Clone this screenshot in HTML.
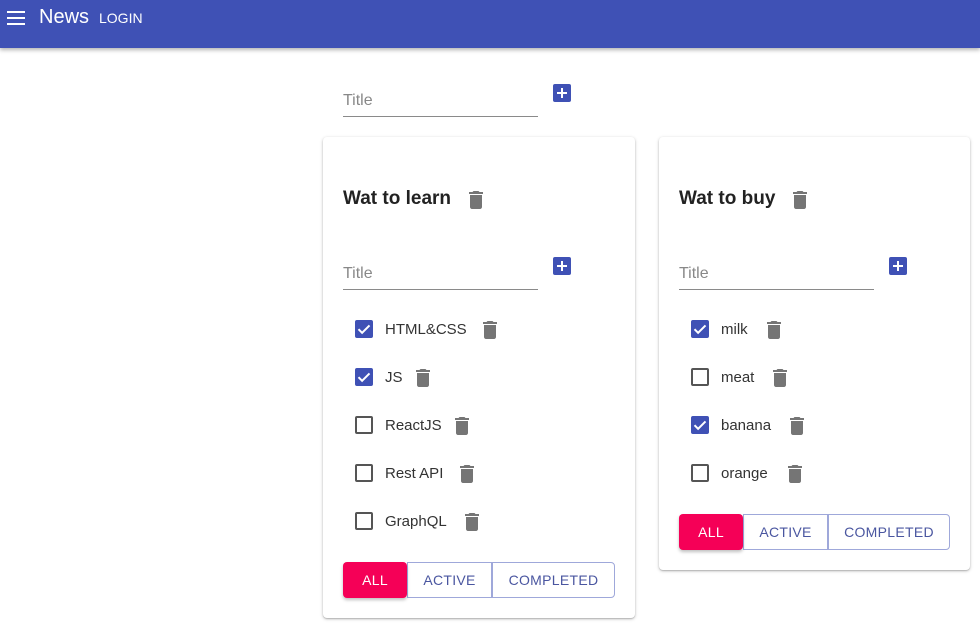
<!DOCTYPE html>
<html><head><meta charset="utf-8"><style>
*{margin:0;padding:0;box-sizing:border-box}
body{width:980px;height:623px;background:#fff;font-family:"Liberation Sans",sans-serif;position:relative;overflow:hidden}
.a{position:absolute}
.bar{left:0;top:0;width:980px;height:48px;background:#3f51b5;box-shadow:0 2px 4px rgba(0,0,0,.3)}
.card{background:#fff;border-radius:4px;box-shadow:0 1px 3px rgba(0,0,0,.25),0 1px 1px rgba(0,0,0,.14)}
.ph{color:#888;font-size:16px}
.ul{height:1px;background:#8a8a8a;width:195px}
.plus{width:18px;height:18px;background:#3f51b5;border-radius:2px}
.plus:before{content:"";position:absolute;left:4px;top:8px;width:10px;height:2px;background:#fff}
.plus:after{content:"";position:absolute;left:8px;top:4px;width:2px;height:10px;background:#fff}
.ttl{font-size:19px;font-weight:bold;color:#222}
.cb{width:18px;height:18px;border:2px solid #555;border-radius:2px}
.cb.on{background:#3f51b5;border-color:#3f51b5}
.cb svg{position:absolute;left:-2px;top:-2px}
.it{font-size:15px;color:#333}
.btn{height:36px;border:1px solid rgba(63,81,181,.5);color:#4a56a0;font-size:14px;display:flex;align-items:center;justify-content:center;letter-spacing:.3px}
.btn.all{background:#f50057;color:#fff;border:none;border-radius:4px;box-shadow:0 2px 3px rgba(0,0,0,.25)}
</style></head><body>
<div class="a bar"></div>
<svg class="a" style="left:6px;top:9px" width="20" height="18" viewBox="0 0 20 18"><path d="M1 3h18M1 9h18M1 15h18" stroke="#fff" stroke-width="2"/></svg>
<div class="a" style="left:39px;top:6px;color:#fff;font-size:20px">News</div>
<div class="a" style="left:99px;top:10px;color:#fff;font-size:14px">LOGIN</div>

<div class="a ph" style="left:343px;top:92px">Title</div>
<div class="a ul" style="left:343px;top:116px"></div>
<div class="a plus" style="left:553px;top:84px"></div>

<div class="a card" style="left:323px;top:137px;width:312px;height:481px"></div>
<div class="a card" style="left:659px;top:137px;width:311px;height:433px"></div>

<svg width="0" height="0" style="position:absolute"><defs><symbol id="t" viewBox="0 0 24 24"><path fill="#757575" d="M6 19c0 1.1.9 2 2 2h8c1.1 0 2-.9 2-2V7H6v12zM19 4h-3.5l-1-1h-5l-1 1H5v2h14V4z"/></symbol><symbol id="c" viewBox="0 0 18 18"><path d="M3.5 9.2l3.6 3.6 7.4-7.4" stroke="#fff" stroke-width="2" fill="none"/></symbol></defs></svg>

<!-- card1 -->
<div class="a ttl" style="left:343px;top:188px">Wat to learn</div>
<svg class="a" style="left:464px;top:188px" width="24" height="24"><use href="#t"/></svg>
<div class="a ph" style="left:343px;top:265px">Title</div>
<div class="a ul" style="left:343px;top:289px"></div>
<div class="a plus" style="left:553px;top:257px"></div>

<div class="a cb on" style="left:355px;top:320px"><svg width="18" height="18"><use href="#c"/></svg></div>
<div class="a it" style="left:385px;top:321px">HTML&amp;CSS</div>
<svg class="a" style="left:478px;top:318px" width="24" height="24"><use href="#t"/></svg>
<div class="a cb on" style="left:355px;top:368px"><svg width="18" height="18"><use href="#c"/></svg></div>
<div class="a it" style="left:385px;top:369px">JS</div>
<svg class="a" style="left:411px;top:366px" width="24" height="24"><use href="#t"/></svg>
<div class="a cb" style="left:355px;top:416px"></div>
<div class="a it" style="left:385px;top:417px">ReactJS</div>
<svg class="a" style="left:450px;top:414px" width="24" height="24"><use href="#t"/></svg>
<div class="a cb" style="left:355px;top:464px"></div>
<div class="a it" style="left:385px;top:465px">Rest API</div>
<svg class="a" style="left:455px;top:462px" width="24" height="24"><use href="#t"/></svg>
<div class="a cb" style="left:355px;top:512px"></div>
<div class="a it" style="left:385px;top:513px">GraphQL</div>
<svg class="a" style="left:460px;top:510px" width="24" height="24"><use href="#t"/></svg>

<div class="a btn all" style="left:343px;top:562px;width:64px">ALL</div>
<div class="a btn" style="left:407px;top:562px;width:85px">ACTIVE</div>
<div class="a btn" style="left:492px;top:562px;width:123px;border-radius:0 4px 4px 0">COMPLETED</div>

<!-- card2 -->
<div class="a ttl" style="left:679px;top:188px">Wat to buy</div>
<svg class="a" style="left:788px;top:188px" width="24" height="24"><use href="#t"/></svg>
<div class="a ph" style="left:679px;top:265px">Title</div>
<div class="a ul" style="left:679px;top:289px"></div>
<div class="a plus" style="left:889px;top:257px"></div>

<div class="a cb on" style="left:691px;top:320px"><svg width="18" height="18"><use href="#c"/></svg></div>
<div class="a it" style="left:721px;top:321px">milk</div>
<svg class="a" style="left:762px;top:318px" width="24" height="24"><use href="#t"/></svg>
<div class="a cb" style="left:691px;top:368px"></div>
<div class="a it" style="left:721px;top:369px">meat</div>
<svg class="a" style="left:768px;top:366px" width="24" height="24"><use href="#t"/></svg>
<div class="a cb on" style="left:691px;top:416px"><svg width="18" height="18"><use href="#c"/></svg></div>
<div class="a it" style="left:721px;top:417px">banana</div>
<svg class="a" style="left:785px;top:414px" width="24" height="24"><use href="#t"/></svg>
<div class="a cb" style="left:691px;top:464px"></div>
<div class="a it" style="left:721px;top:465px">orange</div>
<svg class="a" style="left:783px;top:462px" width="24" height="24"><use href="#t"/></svg>

<div class="a btn all" style="left:679px;top:514px;width:64px">ALL</div>
<div class="a btn" style="left:743px;top:514px;width:85px">ACTIVE</div>
<div class="a btn" style="left:828px;top:514px;width:122px;border-radius:0 4px 4px 0">COMPLETED</div>
</body></html>
